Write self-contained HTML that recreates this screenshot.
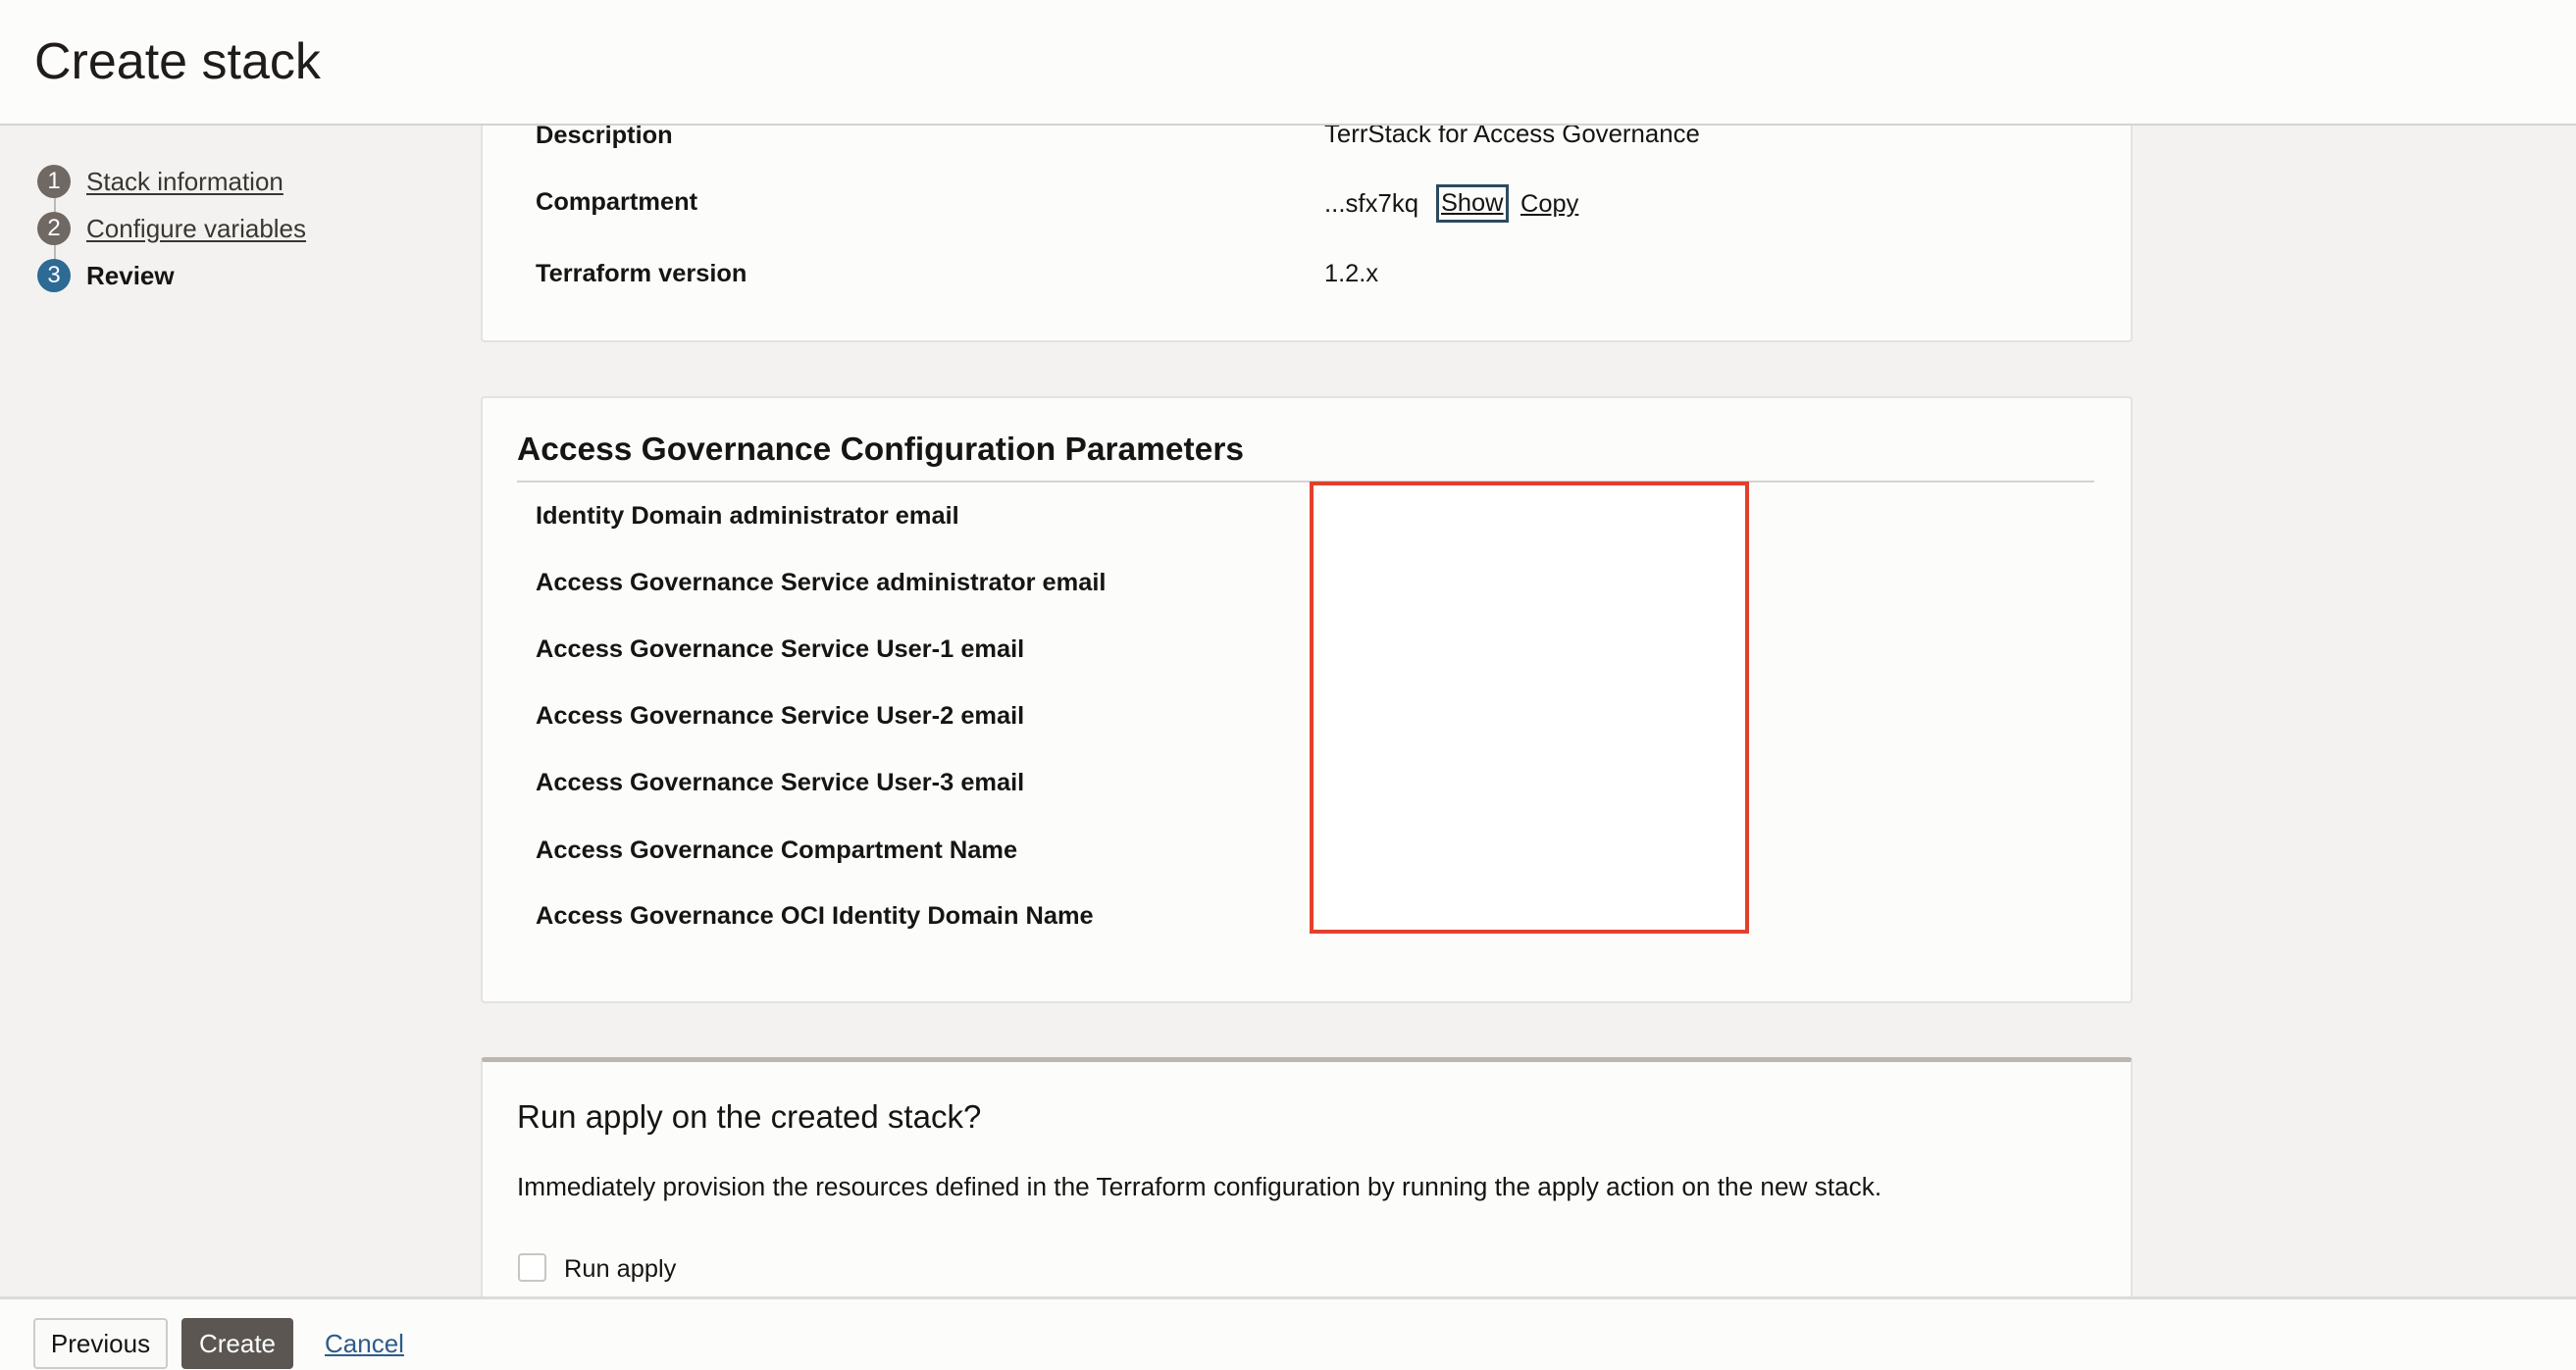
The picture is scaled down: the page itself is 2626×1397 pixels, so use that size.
<!DOCTYPE html>
<html><head><meta charset="utf-8"><style>
*{box-sizing:border-box;margin:0;padding:0}
body{width:2626px;height:1397px;background:#f3f2f1;font-family:"Liberation Sans",Arial,sans-serif;color:#161513;position:relative;overflow:hidden}
.abs{position:absolute;white-space:nowrap}
.hdr{position:absolute;left:0;top:0;width:2626px;height:128px;background:#fcfcfb;border-bottom:2px solid #d6d3d0;z-index:5}
.card{position:absolute;left:490px;width:1684px;background:#fcfcfb;border:2px solid #e4e2e0;border-radius:4px}
.lbl{font-weight:bold;font-size:25.4px}
.val{font-size:25.4px}
.circ{position:absolute;left:38px;width:34px;height:34px;border-radius:50%;color:#fff;font-size:24px;text-align:center;line-height:34px}
.step{position:absolute;left:88px;font-size:26px;color:#3a3631;text-decoration:underline;text-underline-offset:3px}
.foot{position:absolute;left:0;top:1322px;width:2626px;height:75px;background:#fcfcfb;border-top:3px solid #dedbd8;z-index:5}
</style></head><body>
<div class="hdr"><div class="abs" style="left:35px;top:33px;font-size:52px;color:#1f1c19">Create stack</div></div>

<div style="position:absolute;left:55px;top:190px;width:2px;height:90px;background:#bdb9b5"></div>
<div class="circ" style="top:168px;background:#6f6863">1</div>
<div class="step" style="top:170px">Stack information</div>
<div class="circ" style="top:216px;background:#6f6863">2</div>
<div class="step" style="top:218px">Configure variables</div>
<div class="circ" style="top:264px;background:#2d6a94">3</div>
<div class="step" style="top:266px;font-weight:bold;text-decoration:none;color:#161513">Review</div>

<div class="card" style="top:60px;height:289px">
<div class="abs lbl" style="left:54px;top:62px">Description</div>
<div class="abs val" style="left:858px;top:61px;font-size:25.8px">TerrStack for Access Governance</div>
<div class="abs lbl" style="left:54px;top:130px">Compartment</div>
<div class="abs val" style="left:858px;top:132px;font-size:25.8px">...sfx7kq</div>
<div class="abs val" style="left:972px;top:126px;border:3px solid #2c4a5e;padding:2px 2px;text-decoration:underline">Show</div>
<div class="abs val" style="left:1058px;top:132px;text-decoration:underline">Copy</div>
<div class="abs lbl" style="left:54px;top:203px">Terraform version</div>
<div class="abs val" style="left:858px;top:203px">1.2.x</div>
</div>

<div class="card" style="top:404px;height:619px">
<div class="abs" style="left:35px;top:34px;font-size:33.5px;font-weight:bold">Access Governance Configuration Parameters</div>
<div class="abs" style="left:35px;top:84px;width:1608px;height:2px;background:#d6d3d0"></div>
<div class="abs lbl" style="left:54px;top:106px">Identity Domain administrator email</div>
<div class="abs lbl" style="left:54px;top:174px">Access Governance Service administrator email</div>
<div class="abs lbl" style="left:54px;top:242px">Access Governance Service User-1 email</div>
<div class="abs lbl" style="left:54px;top:310px">Access Governance Service User-2 email</div>
<div class="abs lbl" style="left:54px;top:378px">Access Governance Service User-3 email</div>
<div class="abs lbl" style="left:54px;top:447px">Access Governance Compartment Name</div>
<div class="abs lbl" style="left:54px;top:514px">Access Governance OCI Identity Domain Name</div>
<div class="abs" style="left:843px;top:85px;width:448px;height:461px;border:4px solid #e2402e;background:#fff"></div>
</div>

<div class="card" style="top:1078px;height:300px;border-top:5px solid #bcb6b1">
<div class="abs" style="left:35px;top:37px;font-size:33px">Run apply on the created stack?</div>
<div class="abs val" style="left:35px;top:112px;font-size:26.2px">Immediately provision the resources defined in the Terraform configuration by running the apply action on the new stack.</div>
<div class="abs" style="left:36px;top:195px;width:29px;height:29px;border:2px solid #c9c5c1;border-radius:4px;background:#fff"></div>
<div class="abs val" style="left:83px;top:197px">Run apply</div>
</div>

<div class="foot">
<div class="abs" style="left:34px;top:19px;width:137px;height:52px;border:2px solid #cfcbc7;border-radius:4px;background:#fafaf9;font-size:26px;text-align:center;line-height:48px">Previous</div>
<div class="abs" style="left:185px;top:19px;width:114px;height:52px;border-radius:4px;background:#5b5652;color:#fff;font-size:26px;text-align:center;line-height:52px">Create</div>
<div class="abs" style="left:331px;top:30px;font-size:26px;color:#2d5c8a;text-decoration:underline">Cancel</div>
</div>
</body></html>
